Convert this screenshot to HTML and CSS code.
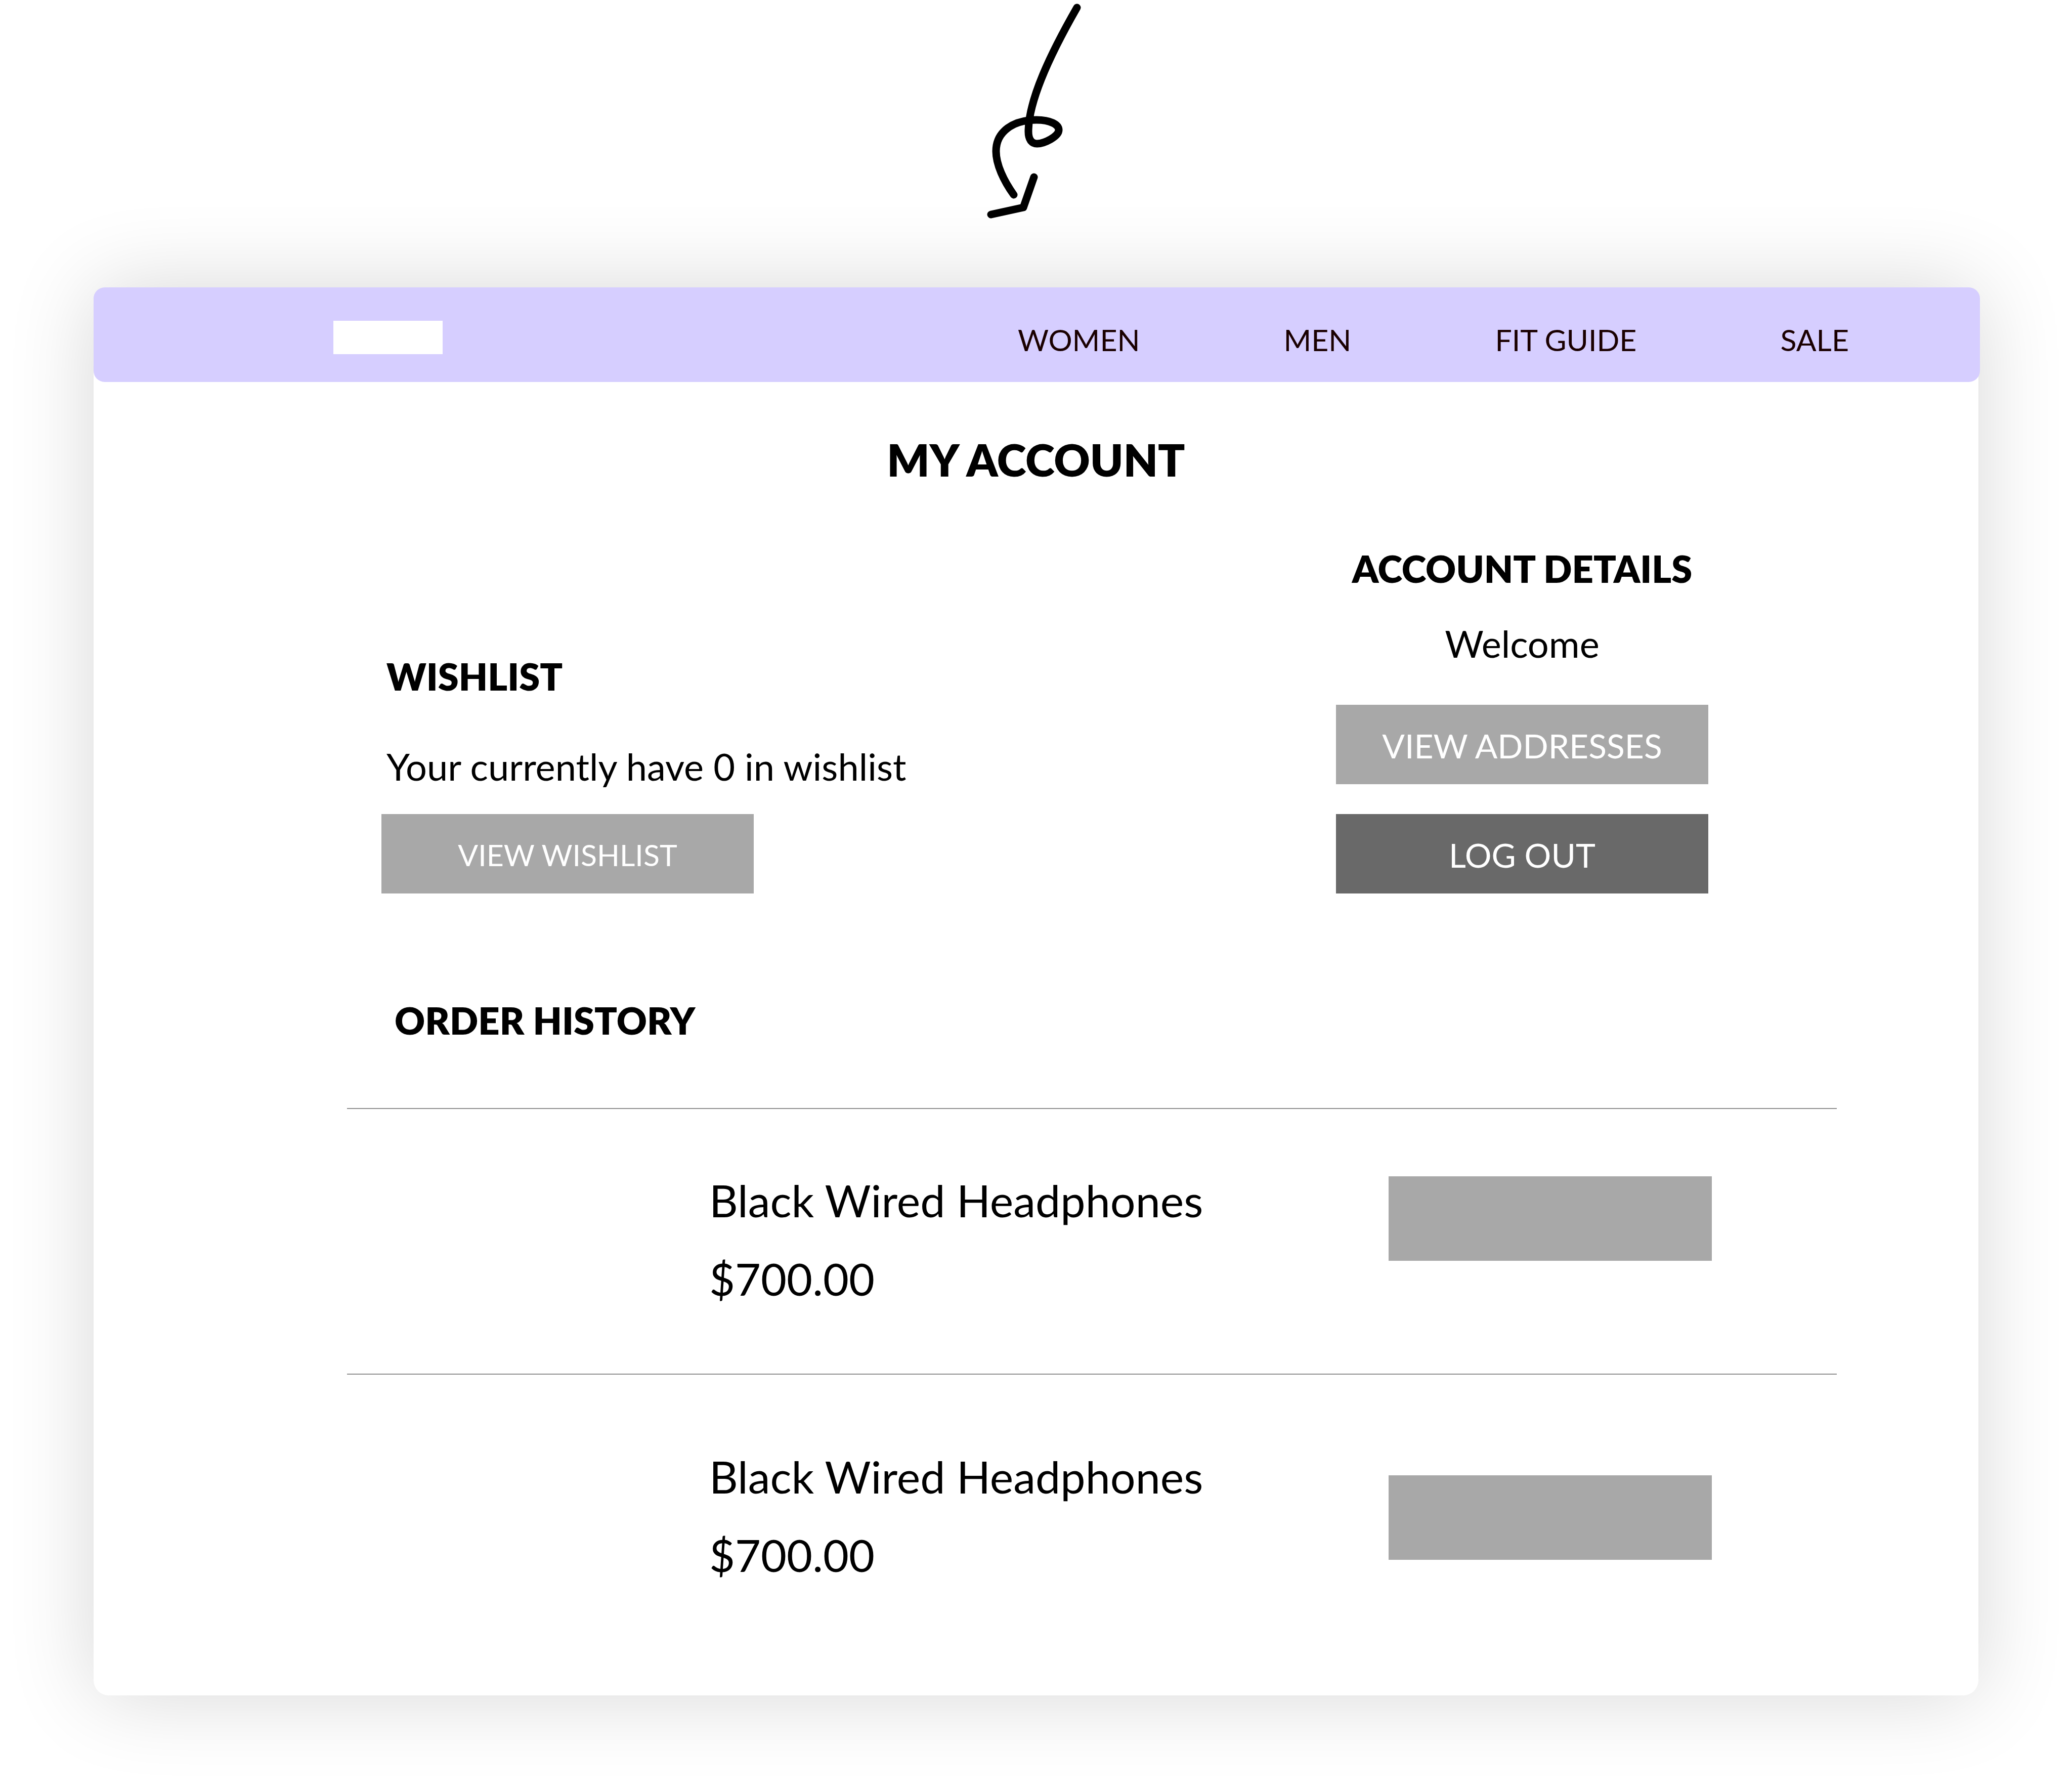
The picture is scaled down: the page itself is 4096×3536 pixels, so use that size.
FILE: index.html
```html
<!DOCTYPE html>
<html lang="en">
<head>
<meta charset="utf-8">
<title>My Account</title>
<link rel="stylesheet" href="styles.css">
</head>
<body>
<svg class="arrow" viewBox="0 0 270 440" aria-hidden="true">
  <path d="M216 15C165 104 120 197 120 260C120 275 126 284 137 284C151 284 180 270 180 257C180 246 163 237 136 237C90 237 56 260 56 299C56 325 71 357 91 385"/>
  <path d="M131 350L110 410L46 424"/>
</svg>
<div class="card">
  <header class="topbar">
    <a class="logo" href="#" aria-label="Home"></a>
    <nav class="nav">
      <a href="#">WOMEN</a>
      <a href="#">MEN</a>
      <a href="#">FIT GUIDE</a>
      <a href="#">SALE</a>
    </nav>
  </header>
  <main>
    <h1 class="title">MY ACCOUNT</h1>
    <div class="account">
      <section class="wishlist">
        <h2>WISHLIST</h2>
        <p>Your currently have 0 in wishlist</p>
        <button class="btn btn-small" type="button">VIEW WISHLIST</button>
      </section>
      <section class="details">
        <h2>ACCOUNT DETAILS</h2>
        <p>Welcome</p>
        <button class="btn" type="button">VIEW ADDRESSES</button>
        <button class="btn btn-dark" type="button">LOG OUT</button>
      </section>
    </div>
    <section class="orders">
      <h2>ORDER HISTORY</h2>
      <ul class="order-list">
        <li class="order">
          <div class="order-text">
            <p>Black Wired Headphones</p>
            <p>$700.00</p>
          </div>
          <button class="order-action" type="button" aria-label="View order"></button>
        </li>
        <li class="order order-last">
          <div class="order-text">
            <p>Black Wired Headphones</p>
            <p>$700.00</p>
          </div>
          <button class="order-action" type="button" aria-label="View order"></button>
        </li>
      </ul>
    </section>
  </main>
</div>
</body>
</html>
```
FILE: styles.css
```css
* { box-sizing: border-box; }

body {
  margin: 0;
  padding-bottom: 185px;
  background: #fff;
  color: #000;
  font-family: Lato, "Open Sans", sans-serif;
}

h1, h2, p, ul { margin: 0; padding: 0; }

.arrow {
  display: block;
  width: 270px;
  height: 440px;
  margin: 0 auto 128px;
  fill: none;
  stroke: #000;
  stroke-width: 15;
  stroke-linecap: round;
  stroke-linejoin: round;
}

.card {
  margin: 0 185px;
  padding-bottom: 224px;
  border-radius: 30px;
  background: #fff;
  box-shadow: 0 0 170px rgba(0, 0, 0, 0.16);
}

.topbar {
  display: flex;
  justify-content: space-between;
  align-items: flex-start;
  height: 187px;
  margin-right: -3px;
  padding: 66px 259px 0 474px;
  border-radius: 22px;
  background: #d6ceff;
}

.logo {
  width: 216px;
  height: 66px;
  background: #fff;
}

.nav {
  display: flex;
  gap: 284px;
  font-size: 59px;
  line-height: 76px;
}

.nav a {
  color: #1a0000;
  text-decoration: none;
}

.title {
  padding-top: 99px;
  font-size: 88px;
  font-weight: 800;
  line-height: 108px;
  text-align: center;
}

h2 {
  font-size: 74px;
  font-weight: 800;
  line-height: 90px;
}

.account {
  display: flex;
  justify-content: space-between;
  align-items: flex-end;
  padding: 117px 534px 0 569px;
  font-size: 74px;
  line-height: 90px;
}

.wishlist h2, .wishlist p { padding-left: 10px; }
.wishlist p { margin: 88px 0 49px; }

.details {
  display: flex;
  flex-direction: column;
  align-items: center;
  width: 736px;
}

.details h2 { white-space: nowrap; }
.details p { margin: 58px 0 76px; }

.btn {
  display: block;
  width: 736px;
  height: 157px;
  padding: 5px 0 0;
  border: 0;
  background: #a8a8a8;
  color: #fff;
  font: inherit;
  font-size: 66px;
}

.btn-small { font-size: 59px; }

.btn-dark {
  margin-top: 59px;
  background: #696969;
}

.orders { padding: 206px 280px 0 501px; }
.orders h2 { padding: 0 94px; }

.order-list {
  margin-top: 128px;
  list-style: none;
}

.order {
  display: flex;
  justify-content: space-between;
  align-items: flex-start;
  padding: 126px 247px 134px 716px;
  border-top: 2px solid #8f8f8f;
  font-size: 88px;
  line-height: 108px;
}

.order-text {
  display: flex;
  flex-direction: column;
  gap: 47px;
}

.order-action {
  width: 639px;
  height: 167px;
  margin-top: 7px;
  padding: 0;
  border: 0;
  background: #a8a8a8;
}

.order-last {
  padding-top: 147px;
  padding-bottom: 0;
}

.order-last .order-action { margin-top: 52px; }
```
